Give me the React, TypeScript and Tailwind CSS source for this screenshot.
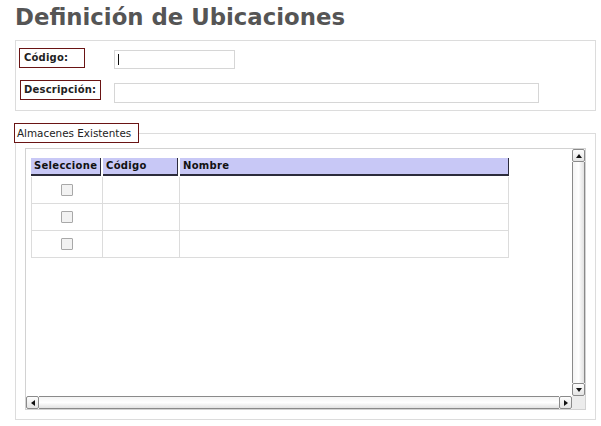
import React from 'react';

const rows = [0, 1, 2];

function Arrow({ dir }: { dir: 'up' | 'down' | 'left' | 'right' }) {
  const pts = {
    up: '1,6 4,2 7,6',
    down: '1,2 4,6 7,2',
    left: '6,1 2,4 6,7',
    right: '2,1 6,4 2,7',
  }[dir];
  return (
    <svg width="8" height="8" viewBox="0 0 8 8">
      <polygon points={pts} fill="#111" />
    </svg>
  );
}

function ScrollBtn({ dir }: { dir: 'up' | 'down' | 'left' | 'right' }) {
  return (
    <div className="w-[13px] h-[13px] flex items-center justify-center border border-[#8a8a8a] rounded-[2px] bg-gradient-to-b from-[#fdfdfd] to-[#e4e4e4]">
      <Arrow dir={dir} />
    </div>
  );
}

export default function App() {
  return (
    <div
      className="w-[601px] h-[426px] bg-white text-[#222] overflow-hidden"
      style={{ fontFamily: '"DejaVu Sans", Verdana, sans-serif' }}
    >
      <h1 className="pl-[15px] pt-[4px] h-[35px] text-[22.8px] leading-[27px] font-bold text-[#555]">
        Definición de Ubicaciones
      </h1>

      {/* datos */}
      <div className="ml-[15px] mr-[5px] mt-[5px] h-[71px] border border-[#dcdcdc] pl-[3px] pt-[7px] flex flex-col gap-[11px]">
        <div className="flex items-start">
          <div className="w-[95px]">
            <div className="w-[66px] h-[20px] pl-[4px] border border-[#6a1414] text-[10px] leading-[18px] font-bold tracking-[0.2px]">
              Código:
            </div>
          </div>
          <div className="mt-[2px] w-[121px] h-[19px] border border-[#d6d6d6] flex items-center pl-[3px]">
            <span className="w-px h-[11px] bg-[#111]" />
          </div>
        </div>
        <div className="flex items-start">
          <div className="w-[95px] pl-[1px]">
            <div className="w-[81px] h-[20px] pl-[3px] border border-[#6a1414] text-[10px] leading-[18px] font-bold tracking-[0.2px]">
              Descripción:
            </div>
          </div>
          <div className="mt-[3px] w-[425px] h-[20px] border border-[#d6d6d6]" />
        </div>
      </div>

      {/* almacenes */}
      <fieldset className="ml-[15px] mr-[5px] mt-[12px] h-[297px] border border-[#dcdcdc] px-[9px] pb-[9px]">
        <legend className="-ml-[11px] h-[20px] pl-[2px] pr-[7px] border border-[#6a1414] text-[10.4px] leading-[18px]">
          Almacenes Existentes
        </legend>
        <div className="mt-[5px] h-[262px] border border-[#d2d2d2] flex flex-col">
          <div className="flex flex-1 min-h-0">
            <div className="flex-1 pl-[5px] pt-[9px]">
              <div className="w-[478px]">
                <div className="flex gap-[2px] text-[10px] font-bold leading-[16px] tracking-[0.3px] text-[#111]">
                  <div className="w-[70px] h-[18px] bg-[#c8c8f6] border-r border-b-2 border-[#2c2c3c] pl-[3px]">
                    Seleccione
                  </div>
                  <div className="w-[75px] h-[18px] bg-[#c8c8f6] border-r border-b-2 border-[#2c2c3c] pl-[3px]">
                    Código
                  </div>
                  <div className="flex-1 h-[18px] bg-[#c8c8f6] border-r border-b-2 border-[#2c2c3c] pl-[3px]">
                    Nombre
                  </div>
                </div>
                <div className="border-l border-[#dcdcdc] mt-[1px]">
                  {rows.map((r) => (
                    <div key={r} className="flex h-[27px] border-b border-[#dcdcdc]">
                      <div className="w-[71px] border-r border-[#dcdcdc] flex items-center justify-center">
                        <span className="w-[12px] h-[12px] border border-[#a8a8a8] bg-[#f2f2f2] rounded-[1px]" />
                      </div>
                      <div className="w-[77px] border-r border-[#dcdcdc]" />
                      <div className="flex-1 border-r border-[#dcdcdc]" />
                    </div>
                  ))}
                </div>
              </div>
            </div>
            <div className="w-[13px] flex flex-col">
              <ScrollBtn dir="up" />
              <div className="flex-1 border-x border-[#8a8a8a] bg-gradient-to-r from-[#f4f4f4] via-white to-[#e2e2e2]" />
              <ScrollBtn dir="down" />
            </div>
          </div>
          <div className="flex h-[13px]">
            <ScrollBtn dir="left" />
            <div className="flex-1 border-y border-[#8a8a8a] bg-gradient-to-b from-[#f4f4f4] via-white to-[#e2e2e2]" />
            <ScrollBtn dir="right" />
            <div className="w-[13px] bg-[#ececec]" />
          </div>
        </div>
      </fieldset>
    </div>
  );
}
